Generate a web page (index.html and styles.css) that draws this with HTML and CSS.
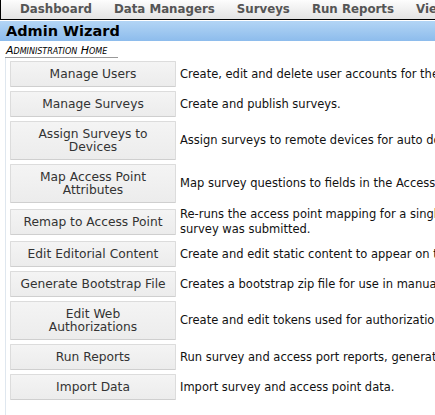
FILE: index.html
```html
<!DOCTYPE html>
<html>
<head>
<meta charset="utf-8">
<title>Admin Wizard</title>
<link rel="stylesheet" href="styles.css">
</head>
<body>
<div class="page">
  <div class="nav">
    <span class="nav-item">Dashboard</span>
    <span class="nav-item">Data Managers</span>
    <span class="nav-item">Surveys</span>
    <span class="nav-item">Run Reports</span>
    <span class="nav-item">View Data</span>
    <span class="nav-item">Administration</span>
  </div>
  <div class="title-bar">Admin Wizard</div>
  <div class="crumb">Administration Home</div>
  <div class="content">
    <table class="wizard">
      <tr><td class="btn-cell"><button class="btn">Manage Users</button></td><td class="desc">Create, edit and delete user accounts for the system.</td></tr>
      <tr><td class="btn-cell"><button class="btn">Manage Surveys</button></td><td class="desc">Create and publish surveys.</td></tr>
      <tr><td class="btn-cell"><button class="btn">Assign Surveys to Devices</button></td><td class="desc">Assign surveys to remote devices for auto download.</td></tr>
      <tr><td class="btn-cell"><button class="btn">Map Access Point Attributes</button></td><td class="desc">Map survey questions to fields in the Access Point record.</td></tr>
      <tr><td class="btn-cell"><button class="btn">Remap to Access Point</button></td><td class="desc">Re-runs the access point mapping for a single survey instance. Use this if the mapping changed after the<br>survey was submitted.</td></tr>
      <tr><td class="btn-cell"><button class="btn">Edit Editorial Content</button></td><td class="desc">Create and edit static content to appear on the dashboard.</td></tr>
      <tr><td class="btn-cell"><button class="btn">Generate Bootstrap File</button></td><td class="desc">Creates a bootstrap zip file for use in manually loading devices.</td></tr>
      <tr><td class="btn-cell"><button class="btn">Edit Web<br>Authorizations</button></td><td class="desc">Create and edit tokens used for authorization of web requests.</td></tr>
      <tr><td class="btn-cell"><button class="btn">Run Reports</button></td><td class="desc">Run survey and access port reports, generate charts and export data.</td></tr>
      <tr><td class="btn-cell"><button class="btn">Import Data</button></td><td class="desc">Import survey and access point data.</td></tr>
    </table>
  </div>
</div>
</body>
</html>
```
FILE: styles.css
```css
html {
  overflow: hidden;
}
body {
  margin: 0;
  background: #fff;
  font-family: "DejaVu Sans", Verdana, sans-serif;
}
.page {
  width: 900px;
}
.nav {
  height: 19px;
  border-left: 1px solid #000;
  border-bottom: 1px solid #000;
  background: linear-gradient(#fdfdfd, #e3e3e3);
  padding-left: 8px;
  white-space: nowrap;
  display: flex;
}
.nav-item {
  font-weight: bold;
  font-size: 11.8px;
  line-height: 19px;
  color: #555;
  padding: 0 11px;
}
.title-bar {
  margin-top: 1px;
  height: 20px;
  line-height: 20px;
  background: linear-gradient(#b3d5f5, #8dbcec);
  font-weight: bold;
  font-size: 14.5px;
  color: #000;
  padding-left: 6px;
}
.crumb {
  margin-left: 5px;
  width: 112px;
  padding-left: 1px;
  padding-top: 3px;
  height: 13px;
  line-height: 13px;
  border-bottom: 1px solid #999;
  font-size: 11px;
  font-style: italic;
  font-variant: small-caps;
  color: #000;
  white-space: nowrap;
}
.content {
  margin-left: 5px;
  border-left: 1px solid #dfe7ef;
  padding-left: 1px;
  padding-bottom: 20px;
}
.wizard {
  border-spacing: 2px;
  width: 880px;
}
.wizard td {
  padding: 1px;
  vertical-align: middle;
}
.btn-cell {
  width: 166px;
}
.btn {
  display: block;
  width: 166px;
  box-sizing: border-box;
  margin: 0;
  padding: 6px 4px 5px;
  border: 1px solid #dcdcdc;
  border-bottom-color: #cfcfcf;
  border-radius: 1px;
  background: linear-gradient(#f4f4f4, #ececec);
  font-family: "DejaVu Sans", Verdana, sans-serif;
  font-size: 12.25px;
  line-height: 13px;
  color: #333;
  text-align: center;
}
.desc {
  font-size: 11.5px;
  line-height: 15px;
  color: #111;
  white-space: nowrap;
}
```
